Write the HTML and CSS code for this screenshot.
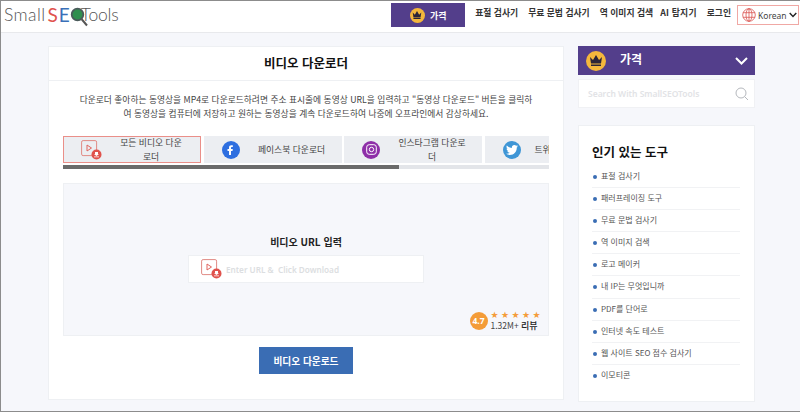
FILE: index.html
```html
<!DOCTYPE html>
<html lang="ko">
<head>
<meta charset="utf-8">
<title>비디오 다운로더</title>
<link rel="stylesheet" href="styles.css">
</head>
<body>
<div class="frame">
  <header class="topbar">
    <a class="logo"><span class="logo-small">Small</span><span class="logo-s">S</span><span class="logo-e">E</span><svg class="logo-q" width="18" height="20" viewBox="0 0 18 20"><circle cx="7.500" cy="7.500" r="5.800" fill="#2f8f4e" stroke="#4a5a5a" stroke-width="1.800"/><path d="M11.500 12l5.500 6.500" stroke="#555" stroke-width="2" fill="none"/></svg><span class="logo-tools">Tools</span></a>
    <nav class="nav">
      <a class="price-btn"><span class="crown crown-sm"><svg width="10" height="8" viewBox="0 0 14 11"><path d="M1 2l3 3 3-5 3 5 3-3-1 6.500H2zM2 9.500h10V11H2z" fill="#2b2438"/></svg></span>가격</a>
      <a class="nav-link nav-first">표절 검사기</a>
      <a class="nav-link">무료 문법 검사기</a>
      <a class="nav-link">역 이미지 검색</a>
      <a class="nav-link nav-ai">AI 탐지기</a>
      <a class="nav-link">로그인</a>
      <div class="lang">
        <svg width="14" height="14" viewBox="0 0 14 14" fill="none" stroke="#d9534f" stroke-width=".8"><circle cx="7" cy="7" r="6.300"/><ellipse cx="7" cy="7" rx="3" ry="6.300"/><path d="M7 .7v12.600M1 4.700h12M1 9.300h12"/></svg>
        <span>Korean</span>
        <svg width="8" height="6" viewBox="0 0 8 6" fill="none" stroke="#222" stroke-width="1.400"><path d="M.7 1l3.300 3.500L7.300 1"/></svg>
      </div>
    </nav>
  </header>

  <div class="page">
    <main class="card">
      <h1 class="title">비디오 다운로더</h1>
      <div class="card-body">
        <p class="desc">다운로더 좋아하는 동영상을 MP4로 다운로드하려면 주소 표시줄에 동영상 URL을 입력하고 "동영상 다운로드" 버튼을 클릭하<br>여 동영상을 컴퓨터에 저장하고 원하는 동영상을 계속 다운로드하여 나중에 오프라인에서 감상하세요.</p>
        <div class="tabs">
          <div class="tab tab-active">
            <svg class="vid" width="21" height="20" viewBox="0 0 21 20"><rect x=".6" y=".6" width="15" height="15" rx="1.500" fill="none" stroke="#e08b85"/><path d="M6 5l4.500 3L6 11z" fill="none" stroke="#e0645e"/><circle cx="15.500" cy="14.500" r="5" fill="#e0524c"/><path d="M14 12h3v2h1l-2.500 2-2.500-2h1zM13 16.500h5v.8h-5z" fill="#fff"/></svg>
            <span class="tab-label">모든 비디오 다운<br>로더</span>
          </div>
          <div class="tab">
            <span class="social fb"><svg width="9" height="12" viewBox="0 0 9 12"><path d="M3 11V7H1.500V5H3V3.500C3 2 4 1.200 5.300 1.200H6.800v1.800H6c-.7 0-1 .3-1 1v1h1.800l-.3 2H5v4z" fill="#fff"/></svg></span>
            <span class="tab-label">페이스북 다운로더</span>
          </div>
          <div class="tab">
            <span class="social ig"><svg width="11" height="11" viewBox="0 0 11 11" fill="none" stroke="#fff"><rect x=".7" y=".7" width="9.600" height="9.600" rx="2.500"/><circle cx="5.500" cy="5.500" r="2.200"/></svg></span>
            <span class="tab-label">인스타그램 다운로<br>더</span>
          </div>
          <div class="tab tab-last">
            <span class="social tw"><svg width="12" height="10" viewBox="0 0 24 20"><path d="M24 2.400c-.9.400-1.800.7-2.800.8 1-.6 1.800-1.600 2.200-2.700-1 .6-2 1-3.100 1.200C19.300.7 18 0 16.600 0c-3.200 0-5.500 3-4.800 6C7.700 5.800 4.100 3.900 1.700.900.400 3.100 1 6 3.200 7.500c-.8 0-1.600-.2-2.200-.6 0 2.300 1.600 4.500 4 5-.7.200-1.500.2-2.200.1.600 2 2.500 3.400 4.600 3.400C5.300 17.100 2.700 17.900 0 17.600 2.200 19 4.800 19.800 7.500 19.800c9.100 0 14.300-7.700 14-14.600 1-.7 1.800-1.600 2.500-2.800z" fill="#fff"/></svg></span>
            <span class="tab-clip">트위터 다운로더</span>
          </div>
        </div>
        <div class="scroll"><div class="thumb"></div></div>
        <section class="panel">
          <label class="url-label">비디오 URL 입력</label>
          <div class="url-input">
            <svg class="vid" width="21" height="20" viewBox="0 0 21 20"><rect x=".6" y=".6" width="15" height="15" rx="1.500" fill="none" stroke="#e08b85"/><path d="M6 5l4.500 3L6 11z" fill="none" stroke="#e0645e"/><circle cx="15.500" cy="14.500" r="5" fill="#e0524c"/><path d="M14 12h3v2h1l-2.500 2-2.500-2h1zM13 16.500h5v.8h-5z" fill="#fff"/></svg>
            <span class="placeholder">Enter URL &amp;&nbsp; Click Download</span>
          </div>
          <div class="rating">
            <span class="score">4.7</span>
            <div class="rating-text">
              <div class="stars"><span>★</span><span>★</span><span>★</span><span>★</span><span>★</span></div>
              <div class="reviews">1.32M+ <b>리뷰</b></div>
            </div>
          </div>
        </section>
        <div class="btn-row"><button class="download">비디오 다운로드</button></div>
      </div>
    </main>

    <aside class="side">
      <div class="side-price">
        <span class="crown crown-lg"><svg width="14" height="11" viewBox="0 0 14 11"><path d="M1 2l3 3 3-5 3 5 3-3-1 6.500H2zM2 9.500h10V11H2z" fill="#2b2438"/></svg></span>
        <span class="side-price-text">가격</span>
        <svg class="side-chev" width="13" height="8" viewBox="0 0 13 8" fill="none" stroke="#fff" stroke-width="2"><path d="M1 1l5.500 5.500L12 1"/></svg>
      </div>
      <div class="search">
        <span>Search With SmallSEOTools</span>
        <svg width="14" height="14" viewBox="0 0 14 14" fill="none" stroke="#b5b8bd" stroke-width="1"><circle cx="6" cy="6" r="5"/><path d="M9.700 9.700L13 13"/></svg>
      </div>
      <div class="tools">
        <h2>인기 있는 도구</h2>
        <ul>
          <li>표절 검사기</li>
          <li>패러프레이징 도구</li>
          <li>무료 문법 검사기</li>
          <li>역 이미지 검색</li>
          <li>로고 메이커</li>
          <li>내 IP는 무엇입니까</li>
          <li>PDF를 단어로</li>
          <li>인터넷 속도 테스트</li>
          <li>웹 사이트 SEO 점수 검사기</li>
          <li>이모티콘</li>
        </ul>
      </div>
    </aside>
  </div>
</div>
</body>
</html>
```
FILE: styles.css
```css
* { box-sizing: border-box; }
html, body { margin: 0; padding: 0; height: 100%; overflow: hidden; }
body { font-family: "Noto Sans CJK KR", "Noto Sans", sans-serif; color: #333; background: #f6f7fb; }
.frame { width: 800px; height: 412px; border-top: 1px solid #8c8c8c; border-left: 1px solid #8c8c8c; border-bottom: 1px solid #8c8c8c; overflow: hidden; }
.topbar { height: 32px; background: #fff; border-bottom: 1px solid #e8e9ec; display: flex; justify-content: space-between; }
.logo { display: flex; align-items: center; padding-left: 3px; height: 26px; font-family: "Lato", sans-serif; font-weight: 300; font-size: 17.500px; color: #555; }
.logo-small { letter-spacing: .4px; }
.logo-s { color: #e0524c; font-weight: 400; font-size: 19px; margin-left: 2px; }
.logo-e { color: #3a70b8; font-weight: 400; font-size: 19px; margin-left: 1px; }
.logo-q { margin-left: 0; margin-right: -7px; margin-top: 6px; }
.logo-tools { letter-spacing: -.2px; }
.nav { display: flex; align-items: flex-start; }
.price-btn { width: 74px; height: 24px; margin-top: 2px; background: #533e8b; color: #fff; font-size: 9px; font-weight: 700; display: flex; align-items: center; justify-content: center; gap: 5px; }
.crown { border-radius: 50%; background: #f4b73c; display: flex; align-items: center; justify-content: center; }
.crown-sm { width: 15px; height: 15px; }
.crown-lg { width: 20px; height: 20px; }
.nav-link { font-size: 8.800px; font-weight: 700; color: #333; margin-left: 10px; line-height: 24px; white-space: nowrap; }
.nav-first { margin-left: 10px; }
.nav-ai { letter-spacing: .2px; margin-left: 7px; }
.lang { width: 62px; height: 20px; margin: 4px 1px 0 6px; border: 1px solid #f0a8a4; display: flex; align-items: center; gap: 2px; padding-left: 4px; font-family: "Noto Sans", sans-serif; font-size: 8.500px; color: #444; }
.page { display: flex; align-items: flex-start; padding: 13px 0 0 47px; }
.card { width: 516px; height: 354px; background: #fff; border: 1px solid #eef0f3; }
.title { margin: 0; height: 34px; font-size: 12.500px; font-weight: 700; color: #111; text-align: center; line-height: 32px; border-bottom: 1px solid #eef0f3; }
.card-body { padding: 0 14px; }
.desc { margin: 12px 0 0; font-size: 8.750px; line-height: 13.500px; text-align: center; color: #444; height: 28px; white-space: nowrap; }
.tabs { display: flex; gap: 2.500px; margin-top: 15px; width: 486px; overflow: hidden; }
.tab { flex: 0 0 138px; height: 27px; background: #eceef2; display: flex; align-items: center; padding-left: 18px; font-size: 8.800px; color: #444; text-align: center; }
.tab-active { border: 1px solid #ea8f89; padding-left: 17px; }
.vid { flex: none; }
.tab-label { flex: 0 0 76px; line-height: 14px; margin-left: 14px; white-space: nowrap; }
.tab-active .tab-label { margin-left: 11px; }
.tab-clip { white-space: nowrap; text-align: left; margin-left: 14px; }
.social { flex: 0 0 18px; height: 18px; border-radius: 50%; display: flex; align-items: center; justify-content: center; }
.fb { background: #2e6fe0; }
.ig { background: #8e2fa8; }
.tw { background: #3f96d6; }
.scroll { width: 486px; height: 4px; margin-top: 2px; background: #e3e5e9; }
.thumb { width: 336px; height: 4px; background: #6b6b6b; }
.panel { position: relative; width: 486px; height: 153px; margin-top: 14px; background: #f6f7fb; border: 1px solid #eef0f3; padding-top: 50px; display: flex; flex-direction: column; align-items: center; }
.url-label { font-size: 10px; font-weight: 700; color: #222; line-height: 16px; }
.url-input { width: 236px; height: 28px; margin-top: 5px; background: #fff; border: 1px solid #eef0f3; display: flex; align-items: center; padding-left: 12px; gap: 4px; }
.placeholder { font-family: "Noto Sans", sans-serif; font-size: 8.200px; font-weight: 600; color: #dcdee1; }
.rating { position: absolute; right: 7px; bottom: 4px; display: flex; align-items: center; gap: 3px; }
.score { width: 18px; height: 18px; border-radius: 50%; background: #f49c38; color: #fff; font-family: "Noto Sans", sans-serif; font-size: 8.500px; font-weight: 700; display: flex; align-items: center; justify-content: center; }
.stars { display: flex; gap: 2px; color: #f49c38; font-family: "DejaVu Sans", sans-serif; font-size: 9px; line-height: 10px; }
.stars span { width: 8.500px; }
.reviews { font-size: 8.500px; line-height: 10px; color: #444; white-space: nowrap; }
.reviews b { font-weight: 500; font-size: 9px; color: #222; }
.btn-row { display: flex; justify-content: center; margin-top: 11px; }
.download { width: 94px; height: 27px; border: 0; background: #3a6db4; color: #fff; font-family: inherit; font-size: 9.700px; font-weight: 700; }
.side { width: 177px; margin-left: 14px; }
.side-price { height: 29px; background: #533e8b; display: flex; align-items: center; padding: 0 8px; color: #fff; font-size: 12px; font-weight: 700; }
.side-price-text { margin-left: 14px; margin-top: -4px; flex: 1; }
.side-chev { margin-right: -1px; }
.search { height: 29px; margin-top: 4px; background: #fff; border: 1px solid #f0f1f4; display: flex; align-items: center; justify-content: space-between; padding: 0 5px 0 9px; font-family: "Noto Sans", sans-serif; font-size: 8.500px; font-weight: 600; color: #e2e3e6; }
.tools { height: 277px; margin-top: 17px; background: #fff; border: 1px solid #eef0f3; padding: 0 14px 0 13px; }
.tools h2 { margin: 0; font-size: 12.500px; font-weight: 700; color: #111; line-height: 18px; padding-top: 17px; height: 40px; }
.tools ul { margin: 0; padding: 0; list-style: none; }
.tools li { height: 22.100px; line-height: 20px; font-size: 8px; color: #555; border-bottom: 1px solid #f1f2f4; padding-left: 9px; position: relative; white-space: nowrap; }
.tools li:last-child { border-bottom: 0; }
.tools li::before { content: ""; position: absolute; left: 1px; top: 9px; width: 4px; height: 4px; border-radius: 50%; background: #3a6db4; }
```
